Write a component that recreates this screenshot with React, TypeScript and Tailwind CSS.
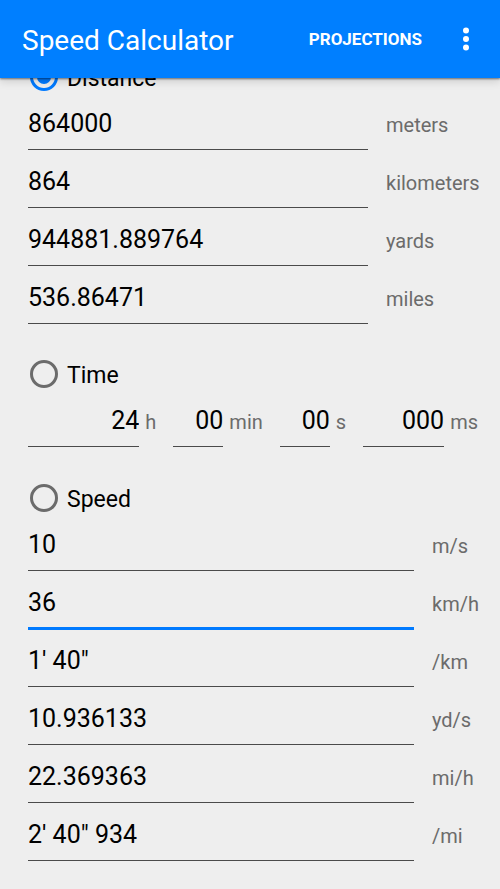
import React, { useState } from 'react';

type Mode = 'distance' | 'time' | 'speed';

const DISTANCE_FIELDS = [
  { unit: 'meters', value: '864000' },
  { unit: 'kilometers', value: '864' },
  { unit: 'yards', value: '944881.889764' },
  { unit: 'miles', value: '536.86471' },
];

const TIME_FIELDS = [
  { unit: 'h', value: '24', group: 'flex-1', input: 'flex-1' },
  { unit: 'min', value: '00', group: '', input: 'w-[50px]' },
  { unit: 's', value: '00', group: '', input: 'w-[50px]' },
  { unit: 'ms', value: '000', group: '', input: 'w-[81px]' },
];

const SPEED_FIELDS = [
  { unit: 'm/s', value: '10' },
  { unit: 'km/h', value: '36', active: true },
  { unit: '/km', value: '1\' 40"' },
  { unit: 'yd/s', value: '10.936133' },
  { unit: 'mi/h', value: '22.369363' },
  { unit: '/mi', value: '2\' 40" 934' },
];

const inputBase = 'h-[58px] min-w-0 bg-transparent pt-[5px] text-[25px] text-black outline-none';
const lineNormal = 'shadow-[inset_0_-1px_0_#4a4a4a]';
const lineActive = 'shadow-[inset_0_-2px_0_#007aff,0_1px_0_#007aff]';

interface ModeRadioProps {
  mode: Mode;
  label: string;
  current: Mode;
  onSelect: (mode: Mode) => void;
}

const ModeRadio: React.FC<ModeRadioProps> = ({ mode, label, current, onSelect }) => (
  <label className="flex h-[30px] items-center gap-[9px] pl-[2px] text-[23px] text-black">
    <input
      type="radio"
      name="mode"
      checked={current === mode}
      onChange={() => onSelect(mode)}
      className="h-7 w-7 shrink-0 appearance-none rounded-full border-[3px] border-[#6b6b6b] checked:border-[#007aff] checked:bg-[#007aff] checked:bg-clip-content checked:p-1"
    />
    <span className="pt-1">{label}</span>
  </label>
);

interface UnitFieldProps {
  unit: string;
  value: string;
  unitWidth: string;
  active?: boolean;
}

const UnitField: React.FC<UnitFieldProps> = ({ unit, value, unitWidth, active }) => {
  const [text, setText] = useState(value);

  return (
    <label className="flex items-baseline gap-[18px]">
      <input
        type="text"
        value={text}
        onChange={(e) => setText(e.target.value)}
        className={`${inputBase} flex-1 ${active ? lineActive : lineNormal}`}
      />
      <span className={`${unitWidth} shrink-0 whitespace-nowrap text-xl text-[#6b6b6b]`}>{unit}</span>
    </label>
  );
};

export default function App() {
  const [mode, setMode] = useState<Mode>('distance');

  return (
    <div className="min-h-screen w-full bg-[#eeeeee] font-['Roboto',sans-serif]">
      {/* App bar */}
      <header className="sticky top-0 z-10 flex h-[78px] items-center bg-[#007fff] pl-[22px] pr-[30px] text-white shadow-[0_1px_2px_rgba(0,0,0,0.5),0_4px_8px_rgba(0,0,0,0.12)]">
        <h1 className="flex-1 whitespace-nowrap pt-1 text-[28px]">Speed Calculator</h1>
        <button type="button" className="pt-[2px] text-[17px] font-bold">
          PROJECTIONS
        </button>
        <button type="button" aria-label="More options" className="ml-10">
          <svg width="8" height="24" viewBox="0 0 8 24" fill="currentColor">
            <circle cx="4" cy="3.6" r="3" />
            <circle cx="4" cy="12" r="3" />
            <circle cx="4" cy="20.4" r="3" />
          </svg>
        </button>
      </header>

      {/* The list is scrolled slightly under the app bar */}
      <main className="-mt-4 pb-7 pl-7 pr-[22px]">
        <section>
          <ModeRadio mode="distance" label="Distance" current={mode} onSelect={setMode} />
          {DISTANCE_FIELDS.map((f) => (
            <UnitField key={f.unit} {...f} unitWidth="w-[92px]" />
          ))}
        </section>

        <section className="mt-[35px]">
          <ModeRadio mode="time" label="Time" current={mode} onSelect={setMode} />
          <div className="flex gap-[17px]">
            {TIME_FIELDS.map((f) => (
              <label key={f.unit} className={`flex min-w-0 items-baseline gap-[6px] ${f.group}`}>
                <input
                  type="text"
                  defaultValue={f.value}
                  className={`${inputBase} ${lineNormal} text-right ${f.input}`}
                />
                <span className="text-xl text-[#6b6b6b]">{f.unit}</span>
              </label>
            ))}
          </div>
        </section>

        <section className="mt-9">
          <ModeRadio mode="speed" label="Speed" current={mode} onSelect={setMode} />
          {SPEED_FIELDS.map((f) => (
            <UnitField key={f.unit} {...f} unitWidth="w-[46px]" />
          ))}
        </section>
      </main>
    </div>
  );
}
